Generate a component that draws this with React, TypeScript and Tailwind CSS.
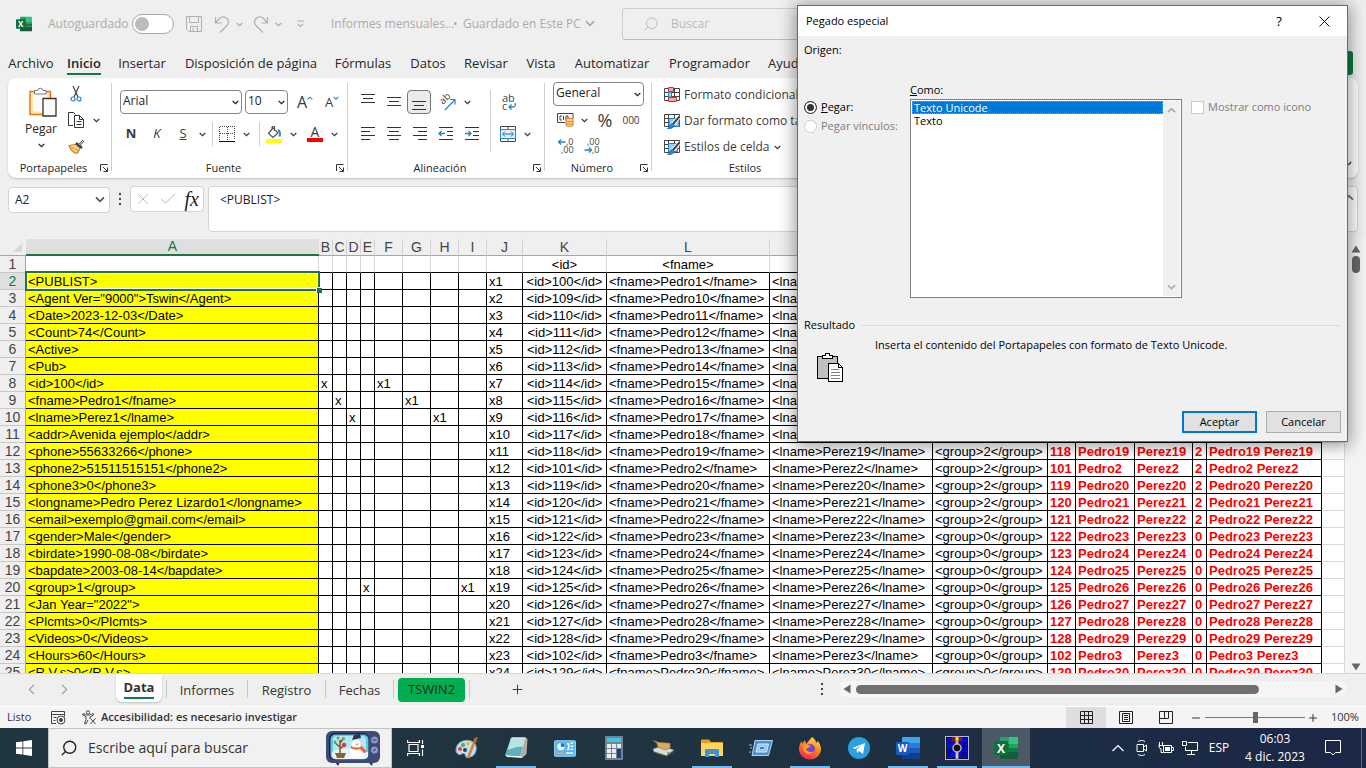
import React from 'react';
import { Search, Plus, Minus, X, Check, ChevronLeft, ChevronRight } from 'lucide-react';

type IconProps = { className?: string };

const menuTabs = [
  { label: 'Archivo', width: 'w-[60px]' },
  { label: 'Inicio', width: 'w-[46px]' },
  { label: 'Insertar', width: 'w-[70px]' },
  { label: 'Disposición de página', width: 'w-[148px]' },
  { label: 'Fórmulas', width: 'w-[76px]' },
  { label: 'Datos', width: 'w-[54px]' },
  { label: 'Revisar', width: 'w-[62px]' },
  { label: 'Vista', width: 'w-[48px]' },
  { label: 'Automatizar', width: 'w-[94px]' },
  { label: 'Programador', width: 'w-[101px]' },
  { label: 'Ayuda', width: 'w-[54px]' },
];

const columns = [
  { name: 'A', width: 293 },
  { name: 'B', width: 14 },
  { name: 'C', width: 14 },
  { name: 'D', width: 14 },
  { name: 'E', width: 14 },
  { name: 'F', width: 28 },
  { name: 'G', width: 28 },
  { name: 'H', width: 28 },
  { name: 'I', width: 28 },
  { name: 'J', width: 36 },
  { name: 'K', width: 84 },
  { name: 'L', width: 163 },
  { name: 'M', width: 163 },
  { name: 'N', width: 115 },
  { name: 'O', width: 28 },
  { name: 'P', width: 59 },
  { name: 'Q', width: 58 },
  { name: 'R', width: 14 },
  { name: 'S', width: 115 },
  { name: 'T', width: 23 },
];

const xmlLines = [
  '<PUBLIST>',
  '<Agent Ver="9000">Tswin</Agent>',
  '<Date>2023-12-03</Date>',
  '<Count>74</Count>',
  '<Active>',
  '<Pub>',
  '<id>100</id>',
  '<fname>Pedro1</fname>',
  '<lname>Perez1</lname>',
  '<addr>Avenida ejemplo</addr>',
  '<phone>55633266</phone>',
  '<phone2>51511515151</phone2>',
  '<phone3>0</phone3>',
  '<longname>Pedro Perez Lizardo1</longname>',
  '<email>exemplo@gmail.com</email>',
  '<gender>Male</gender>',
  '<birdate>1990-08-08</birdate>',
  '<bapdate>2003-08-14</bapdate>',
  '<group>1</group>',
  '<Jan Year="2022">',
  '<Plcmts>0</Plcmts>',
  '<Videos>0</Videos>',
  '<Hours>60</Hours>',
  '<R.V.s>0</R.V.s>',
];

// publishers come sorted as text: 1, 10..19, 2, 20..29, 3, 30
const people = [1, 10, 11, 12, 13, 14, 15, 16, 17, 18, 19, 2, 20, 21, 22, 23, 24, 25, 26, 27, 28, 29, 3, 30];

const marks: Record<string, string> = {
  B8: 'x', F8: 'x1',
  C9: 'x', G9: 'x1',
  D10: 'x', H10: 'x1',
  E20: 'x', I20: 'x1',
};

function cellText(col: string, row: number) {
  if (row === 1) {
    if (col === 'K') return '<id>';
    if (col === 'L') return '<fname>';
    if (col === 'M') return '<lname>';
    return '';
  }
  const n = people[row - 2];
  const group = row > 16 ? 0 : 2;
  switch (col) {
    case 'A': return xmlLines[row - 2];
    case 'J': return `x${row - 1}`;
    case 'K': return `<id>${n + 99}</id>`;
    case 'L': return `<fname>Pedro${n}</fname>`;
    case 'M': return `<lname>Perez${n}</lname>`;
    case 'N': return `<group>${group}</group>`;
    case 'O': return `${n + 99}`;
    case 'P': return `Pedro${n}`;
    case 'Q': return `Perez${n}`;
    case 'R': return `${group}`;
    case 'S': return `Pedro${n} Perez${n}`;
    default: return marks[`${col}${row}`] ?? '';
  }
}

function cellClass(col: string, row: number) {
  const base = 'h-[17px] p-0 pt-0.5 whitespace-nowrap leading-[14px] border-r border-b';
  const align = row === 1 || col === 'K' ? 'text-center' : 'text-left pl-0.5';
  const line = row === 1
    ? `border-r-[#d9d9d9] ${col === 'T' ? 'border-b-[#d9d9d9]' : 'border-b-black'}`
    : col === 'T' ? 'border-[#d9d9d9]' : 'border-black';
  const fill = col === 'A' && row > 1 ? 'bg-[#ffff00]' : 'bg-white';
  const ink = 'OPQRS'.includes(col) ? 'font-bold text-[#ff0000]' : 'text-black';
  return `${base} ${align} ${line} ${fill} ${ink}`;
}

function Chevron({ className = 'w-[7px]' }: IconProps) {
  return (
    <svg viewBox="0 0 7 5" className={`shrink-0 ${className}`} fill="none" stroke="currentColor" strokeWidth="1.2">
      <path d="M.7 1l2.8 2.7L6.3 1" />
    </svg>
  );
}

function Launcher() {
  return (
    <button aria-label="Más opciones" className="absolute right-[3px] bottom-1.5">
      <svg viewBox="0 0 8 8" className="w-2 h-2" fill="none" stroke="#333">
        <path d="M.5 7V.5H7.5M3 3l4 4M7.5 3.5v4h-4" />
      </svg>
    </button>
  );
}

function Group({ label, width, launcher = true, children }: { label: string; width: string; launcher?: boolean; children: React.ReactNode }) {
  return (
    <>
      <section aria-label={label} className={`relative flex flex-col shrink-0 h-[100px] ${width}`}>
        <div className="h-[82px]">{children}</div>
        <div className="text-center text-[11px] leading-4 text-[#262626] pr-3">{label}</div>
        {launcher && <Launcher />}
      </section>
      <div className="w-px h-[88px] mt-[5px] shrink-0 bg-[#cfcfcf]" />
    </>
  );
}

function Tool({ label, className = 'w-[26px]', children }: { label: string; className?: string; children: React.ReactNode }) {
  return (
    <button aria-label={label} className={`h-6 flex items-center justify-center shrink-0 text-[#3b3b3b] ${className}`}>
      {children}
    </button>
  );
}

function Lines({ d }: { d: string }) {
  return (
    <svg viewBox="0 0 16 16" className="w-4 h-4" fill="none" stroke="#333" shapeRendering="crispEdges">
      <path d={d} />
    </svg>
  );
}

function Combo({ label, value, className }: { label: string; value: string; className: string }) {
  return (
    <div className={`relative h-6 shrink-0 ${className}`}>
      <select aria-label={label} className="appearance-none block w-full h-6 rounded-[4px] border border-[#858585] bg-white pl-0.5 pb-0.5 text-xs leading-4 text-[#222]">
        <option>{value}</option>
      </select>
      <Chevron className="w-[7px] absolute right-[3px] top-[10px] text-[#222] pointer-events-none" />
    </div>
  );
}

function ExcelLogo({ className }: IconProps) {
  return (
    <svg viewBox="0 0 24 24" className={className}>
      <path d="M7 1h8v7H6V2a1 1 0 011-1z" fill="#21a366" />
      <path d="M15 1h8a1 1 0 011 1v6h-9z" fill="#33c481" />
      <path d="M6 8h9v8H6z" fill="#107c41" />
      <path d="M15 8h9v4h-9z" fill="#21a366" />
      <path d="M15 12h9v4h-9z" fill="#107c41" />
      <path d="M6 16h18v6a1 1 0 01-1 1H7a1 1 0 01-1-1z" fill="#185c37" />
      <rect x="0" y="5" width="14" height="14" rx="1" fill="#0f703b" />
      <text x="7" y="16.500" fontSize="12" fontWeight="700" fill="#fff" textAnchor="middle" fontFamily="Open Sans, sans-serif">X</text>
    </svg>
  );
}

function WordLogo({ className }: IconProps) {
  return (
    <svg viewBox="0 0 24 24" className={className}>
      <path d="M6 2a1 1 0 011-1h16a1 1 0 011 1v5H6z" fill="#41a5ee" />
      <path d="M6 7h18v5H6z" fill="#2b7cd3" />
      <path d="M6 12h18v5H6z" fill="#185abd" />
      <path d="M6 17h18v5a1 1 0 01-1 1H7a1 1 0 01-1-1z" fill="#103f91" />
      <rect x="0" y="6" width="13" height="13" rx="1" fill="#185abd" />
      <text x="6.500" y="16" fontSize="10" fontWeight="700" fill="#fff" textAnchor="middle" fontFamily="Open Sans, sans-serif">W</text>
    </svg>
  );
}

function TitleBar() {
  return (
    <header className="h-12 flex items-center pl-4 text-[#ababab] shrink-0 overflow-hidden">
      <ExcelLogo className="w-4 h-4 shrink-0" />
      <label htmlFor="autosave" className="ml-4 w-[84px] shrink-0 text-xs whitespace-nowrap">Autoguardado</label>
      <span className="relative w-[42px] h-5 shrink-0">
        <input id="autosave" type="checkbox" className="appearance-none block w-[42px] h-5 rounded-full border border-[#a8a8a8] bg-white" />
        <span className="absolute left-[3px] top-[3px] w-3.5 h-3.5 rounded-full bg-[#bdbdbd] pointer-events-none" />
      </span>
      <button aria-label="Guardar" className="ml-3 shrink-0">
        <svg viewBox="0 0 16 16" className="w-4 h-4" fill="none" stroke="#b0b0b0">
          <path d="M.5.5h15v15H3l-2.500-2.500zM3.500.5v6h9v-6M4.500 15.500v-5h7v5M7 15v-3" />
        </svg>
      </button>
      <button aria-label="Deshacer" className="ml-3 shrink-0 flex items-center gap-1.5">
        <svg viewBox="0 0 16 17" className="w-4 h-[17px]" fill="none" stroke="#b0b0b0" strokeWidth="1.2">
          <path d="M1.500 1v6h6M1.500 7l4-4.500a5 5 0 017.500 0 5 5 0 010 7L6 16.500" />
        </svg>
        <Chevron />
      </button>
      <button aria-label="Rehacer" className="ml-2.5 shrink-0 flex items-center gap-1.5">
        <svg viewBox="0 0 16 17" className="w-4 h-[17px]" fill="none" stroke="#b0b0b0" strokeWidth="1.2">
          <path d="M14.500 1v6h-6M14.500 7l-4-4.500a5 5 0 00-7.500 0 5 5 0 000 7l7 7" />
        </svg>
        <Chevron />
      </button>
      <button aria-label="Personalizar barra" className="ml-[14px] shrink-0">
        <svg viewBox="0 0 9 8" className="w-[9px] h-2" fill="none" stroke="#b0b0b0" strokeWidth="1.2">
          <path d="M1 1h7M2 4l2.500 2.500L7 4" />
        </svg>
      </button>
      <div className="ml-[26px] w-[291px] shrink-0 flex items-center text-xs whitespace-nowrap">
        <span className="w-[122px] shrink-0">Informes mensuales...</span>
        <span className="w-2.5 shrink-0">•</span>
        <span className="mr-1 shrink-0">Guardado en Este PC</span>
        <Chevron className="w-2.5" />
      </div>
      <div className="w-[500px] shrink-0 h-8 flex items-center rounded-[3px] border border-[#cfcfcf] border-b-[#bdbdbd] bg-[#efefef] pl-5">
        <Search className="w-4 h-4 -scale-x-100 text-[#bdbdbd]" strokeWidth={1.5} />
        <input aria-label="Buscar" placeholder="Buscar" className="ml-3 w-40 text-xs bg-transparent placeholder:text-[#b9b9b9]" />
      </div>
    </header>
  );
}

function MenuTabs() {
  return (
    <nav className="h-[30px] pl-px flex shrink-0 items-start justify-between">
      <div className="flex">
        {menuTabs.map((tab) => (
          <a
            key={tab.label}
            href="#"
            className={`shrink-0 h-[27px] flex flex-col items-center pt-1.5 text-[13px] leading-[19px] whitespace-nowrap text-[#262626] ${tab.width}`}
          >
            <span className={tab.label === 'Inicio' ? 'font-semibold border-b-2 border-[#107c41]' : ''}>{tab.label}</span>
          </a>
        ))}
      </div>
      <button className="mt-[3px] mr-[13px] w-24 h-6 rounded-[3px] bg-[#0f7b3f] text-white text-xs">Compartir</button>
    </nav>
  );
}

function StyleIcon({ kind }: { kind: 'cond' | 'table' | 'cell' }) {
  return (
    <svg viewBox="0 0 16 16" className="w-4 h-4 shrink-0" fill="none" stroke="#444">
      <path d="M.5 1.500h15v12H.5zM.5 5.500h15M.5 9.500h15M4.500 1.500v12M10.500 1.500v12" fill="#fff" />
      {kind === 'cond' && (
        <>
          <path d="M4.500.500h5v4h-5zM4.500 10.500h8v4h-8z" fill="#f7a6a6" stroke="#d92c2c" />
          <path d="M4.500 5h3v5h-3z" fill="#9ccdf0" stroke="#1f7fc9" />
        </>
      )}
      {kind !== 'cond' && (
        <>
          <path d={kind === 'table' ? 'M5 5.500h10v8H5z' : 'M4.500 4.500h9v8h-9z'} fill="#9ccdf0" stroke="#1f7fc9" />
          <path d="M15.500 3.500L9 11" stroke="#fff" strokeWidth="4" />
          <path d="M15.500 3.500L9 11" stroke="#444" strokeWidth="2" />
          <path d="M8.500 10.500l2 2c-1.500 3-4 3-7 3 2-1 2-4 5-5z" fill="#2b88d0" stroke="#1f6fb5" />
        </>
      )}
    </svg>
  );
}

function Ribbon() {
  return (
    <div className="mx-2 h-[100px] shrink-0 flex overflow-hidden rounded-lg bg-white shadow-[0_1px_2px_rgba(0,0,0,0.2)]">
      <Group label="Portapapeles" width="w-[103px]">
        <div className="flex pt-1">
          <button className="w-[58px] pl-2 pt-1 flex flex-col items-center text-xs leading-4 text-[#262626]">
            <svg viewBox="0 0 28 31" className="w-7 h-[31px] ml-1" fill="none">
              <path d="M1 5.500h20.500v23H1z" fill="#fbe3a6" stroke="#e07b12" strokeWidth="1.500" />
              <path d="M4 8h14.500v17.500H4z" fill="#fafafa" />
              <path d="M5.500 8V4.500h3a2.800 2.800 0 015.500 0h3V8z" fill="#fff" stroke="#777" />
              <path d="M14 12.500h13v17.500H14z" fill="#fafafa" stroke="#333" strokeWidth="1.300" />
            </svg>
            <span className="mt-1">Pegar</span>
            <Chevron className="w-[7px] mt-1.5" />
          </button>
          <div className="flex flex-col gap-0.5">
            <Tool label="Cortar" className="w-5">
              <svg viewBox="0 0 12 16" className="w-3 h-4" fill="none" stroke="#444" strokeWidth="1.200">
                <path d="M3 0l5 11M9 0L4 11" />
                <circle cx="3" cy="13" r="2" stroke="#1f86d0" />
                <circle cx="9" cy="13" r="2" stroke="#1f86d0" />
              </svg>
            </Tool>
            <Tool label="Copiar" className="w-9 gap-2">
              <svg viewBox="0 0 17 16" className="w-[17px] h-4" fill="none" stroke="#333">
                <path d="M5 13.500H.5V.5H5.500l2 2M6.500 3.500h5l4 4v8h-9zM11.500 3.500v4h4M8.500 9.500h5M8.500 12.500h5" />
              </svg>
              <Chevron />
            </Tool>
            <Tool label="Copiar formato" className="w-5">
              <svg viewBox="0 0 17 15" className="w-[17px] h-[15px]" fill="none">
                <path d="M1 6.500l7-1 4 4-3 5C5 13.500 2.500 11 1 6.500z" fill="#fbd9a0" stroke="#e07b12" strokeWidth="1.200" />
                <path d="M3 8l8 4" stroke="#e07b12" />
                <path d="M8 4l6 5M11 6.500l4.500-5" stroke="#444" strokeWidth="2.500" />
                <path d="M11.500 6l4-4.500" stroke="#fff" />
              </svg>
            </Tool>
          </div>
        </div>
      </Group>

      <Group label="Fuente" width="w-[235px]">
        <div className="flex flex-col gap-2 pt-3">
          <div className="flex items-center pl-2 gap-[3px] h-6">
            <Combo label="Fuente" value="Arial" className="w-[122px]" />
            <Combo label="Tamaño" value="10" className="w-[43px]" />
            <Tool label="Aumentar tamaño" className="w-7 text-base leading-4">A<Chevron className="w-1.5 -scale-y-100 mb-2 text-[#1f86d0]" /></Tool>
            <Tool label="Disminuir tamaño" className="w-5 text-[13px] leading-4">A<Chevron className="w-1.5 mb-2 text-[#1f86d0]" /></Tool>
          </div>
          <div className="flex items-center pl-1.5 text-[13px]">
            <Tool label="Negrita"><b>N</b></Tool>
            <Tool label="Cursiva"><i>K</i></Tool>
            <Tool label="Subrayado"><u>S</u></Tool>
            <Tool label="Más subrayados" className="w-3"><Chevron /></Tool>
            <div className="w-px h-6 mx-1 bg-[#cfcfcf]" />
            <Tool label="Bordes" className="w-5">
              <svg viewBox="0 0 16 16" className="w-4 h-4" fill="none" stroke="#444" shapeRendering="crispEdges">
                <path d="M.5 14V.5h15V14M8 1v14M1 7.500h14" strokeDasharray="1 1" />
                <path d="M0 15.500h16" stroke="#111" strokeWidth="1" />
              </svg>
            </Tool>
            <Tool label="Más bordes" className="w-[18px]"><Chevron /></Tool>
            <div className="w-px h-6 mx-1 bg-[#cfcfcf]" />
            <Tool label="Color de relleno" className="w-5">
              <svg viewBox="0 0 16 17" className="w-4 h-[17px]" fill="none">
                <path d="M7 2l5 5-5 4.500L2.500 7.500zM6 4V1.500a1.200 1.200 0 012.500 0V5" stroke="#555" strokeWidth="1.200" />
                <path d="M12 4c2 1 2.500 4 1.500 6.500" stroke="#1f86d0" strokeWidth="2" />
                <path d="M0 13h16v4H0z" fill="#ff0" />
              </svg>
            </Tool>
            <Tool label="Más rellenos" className="w-[18px]"><Chevron /></Tool>
            <Tool label="Color de fuente" className="w-[26px] flex-col">
              <span className="text-sm leading-3">A</span>
              <span className="w-4 h-1 bg-[#ff0000]" />
            </Tool>
            <Tool label="Más colores" className="w-3"><Chevron /></Tool>
          </div>
        </div>
      </Group>

      <Group label="Alineación" width="w-[196px]">
        <div className="flex pt-3">
          <div className="flex flex-col gap-2 pl-[7px]">
            <div className="flex items-center">
              <Tool label="Alinear arriba"><Lines d="M1 .5h14M3 4.500h10M1 8.500h14" /></Tool>
              <Tool label="Alinear en medio"><Lines d="M1 3.500h14M3 7.500h10M1 11.500h14" /></Tool>
              <Tool label="Alinear abajo" className="w-6 rounded-[4px] border border-[#777] bg-[#ebebeb]"><Lines d="M1 7.500h14M3 11.500h10M1 15.500h14" /></Tool>
              <Tool label="Orientación" className="w-8">
                <svg viewBox="0 0 18 18" className="w-[18px] h-[18px] overflow-visible" fill="none" stroke="#1f86d0" strokeWidth="1.200">
                  <text x="0" y="0" fontSize="10" fill="#444" stroke="none" transform="translate(5 12) rotate(-45)">ab</text>
                  <path d="M7 17L16.500 7M12 6.500h5v5" />
                </svg>
              </Tool>
              <Tool label="Más orientaciones" className="w-2"><Chevron /></Tool>
            </div>
            <div className="flex items-center">
              <Tool label="Izquierda"><Lines d="M1 1.500h14M1 5.500h9M1 9.500h14M1 13.500h9" /></Tool>
              <Tool label="Centrar"><Lines d="M1 1.500h14M3 5.500h10M1 9.500h14M3 13.500h10" /></Tool>
              <Tool label="Derecha"><Lines d="M1 1.500h14M6 5.500h9M1 9.500h14M6 13.500h9" /></Tool>
              <Tool label="Disminuir sangría">
                <svg viewBox="0 0 16 16" className="w-4 h-4" fill="none" stroke="#333">
                  <path d="M1 1.500h14M9 5.500h6M9 9.500h6M1 13.500h14" />
                  <path d="M1 7.500h6M3.500 5L1 7.500 3.500 10" stroke="#1f86d0" strokeWidth="1.300" />
                </svg>
              </Tool>
              <Tool label="Aumentar sangría">
                <svg viewBox="0 0 16 16" className="w-4 h-4" fill="none" stroke="#333">
                  <path d="M1 1.500h14M9 5.500h6M9 9.500h6M1 13.500h14" />
                  <path d="M1 7.500h6M4.500 5L7 7.500 4.500 10" stroke="#1f86d0" strokeWidth="1.300" />
                </svg>
              </Tool>
            </div>
          </div>
          <div className="w-px h-[62px] ml-[5px] bg-[#cfcfcf]" />
          <div className="flex flex-col gap-2 pl-2">
            <Tool label="Ajustar texto" className="w-5">
              <svg viewBox="0 0 16 17" className="w-4 h-[17px] overflow-visible" fill="none" stroke="#1f86d0" strokeWidth="1.300">
                <text x="1" y="8" fontSize="11" fill="#444" stroke="none">ab</text>
                <text x="1" y="16" fontSize="11" fill="#444" stroke="none">c</text>
                <path d="M14 9c1 2 0 4-2.500 4H8M10.500 10.500L8 13l2.500 2.500" />
              </svg>
            </Tool>
            <Tool label="Combinar y centrar" className="w-8 gap-2">
              <svg viewBox="0 0 16 16" className="w-4 h-4" fill="none" stroke="#444">
                <path d="M.5.500h15v15H.5zM8 .5v3M8 12.500v3" />
                <path d="M.5 3.500h15v9H.5z" fill="#e4f1fb" stroke="#1f86d0" />
                <path d="M3 8h10M5 5.500L2.500 8 5 10.500M11 5.500L13.500 8 11 10.500" stroke="#1f6fb5" />
              </svg>
              <Chevron />
            </Tool>
          </div>
        </div>
      </Group>

      <Group label="Número" width="w-[106px]">
        <div className="pt-1 pl-2">
          <Combo label="Formato de número" value="General" className="w-[91px]" />
          <div className="flex items-center mt-0.5">
            <Tool label="Moneda" className="w-6">
              <svg viewBox="0 0 17 14" className="w-[17px] h-[14px]" fill="none" stroke="#444">
                <path d="M16 5V.500H.5v9H8M5 3H3v4h2M6.500 3v4M9 7V3h2v2" />
                <path d="M9 5.500h7v7c-1.500 1.200-5.500 1.200-7 0z" fill="#fbd9a0" stroke="#e07b12" />
                <path d="M9 8c2 1 5 1 7 0M9 10.500c2 1 5 1 7 0" stroke="#e07b12" />
              </svg>
            </Tool>
            <Tool label="Más monedas" className="w-3.5"><Chevron /></Tool>
            <Tool label="Porcentaje" className="w-7 text-lg leading-4">%</Tool>
            <Tool label="Millares" className="w-6 text-[10px]">000</Tool>
          </div>
          <div className="flex items-center mt-0.5">
            <Tool label="Aumentar decimales">
              <svg viewBox="0 0 16 16" className="w-4 h-4 overflow-visible" fill="none" stroke="#1f86d0" strokeWidth="1.300">
                <path d="M.5 4h7M3 1.500L.5 4 3 6.500" />
                <text x="8" y="7" fontSize="9" fill="#444" stroke="none">,0</text>
                <text x="3" y="15" fontSize="9" fill="#444" stroke="none">,00</text>
              </svg>
            </Tool>
            <Tool label="Disminuir decimales">
              <svg viewBox="0 0 16 16" className="w-4 h-4 overflow-visible" fill="none" stroke="#1f86d0" strokeWidth="1.300">
                <path d="M.5 12h7M5 9.500L7.500 12 5 14.500" />
                <text x="3" y="7" fontSize="9" fill="#444" stroke="none">,00</text>
                <text x="8" y="15" fontSize="9" fill="#444" stroke="none">,0</text>
              </svg>
            </Tool>
          </div>
        </div>
      </Group>

      <Group label="Estilos" width="w-[198px]" launcher={false}>
        <div className="flex flex-col gap-0.5 pt-[5px] pl-3 text-xs whitespace-nowrap">
          <Tool label="Formato condicional" className="justify-start! gap-1"><StyleIcon kind="cond" />Formato condicional<Chevron /></Tool>
          <Tool label="Dar formato como tabla" className="justify-start! gap-1"><StyleIcon kind="table" />Dar formato como tabla<Chevron /></Tool>
          <Tool label="Estilos de celda" className="justify-start! gap-1"><StyleIcon kind="cell" />Estilos de celda<Chevron /></Tool>
        </div>
      </Group>
      <button aria-label="Contraer cinta" className="ml-auto mr-1.5 self-end mb-3 text-[#333]"><Chevron /></button>
    </div>
  );
}

function FormulaBar() {
  return (
    <div className="mt-2 mb-[7px] mx-2 flex items-start shrink-0 text-[#222]">
      <div className="relative w-[102px] h-[26px]">
        <input aria-label="Cuadro de nombres" defaultValue="A2" className="w-full h-full rounded-[4px] border border-[#d3d3d3] bg-white pl-1.5 text-xs" />
        <Chevron className="w-2.5 absolute right-[5px] top-[10px] text-[#555]" />
      </div>
      <div className="w-5 h-[26px] flex flex-col items-center justify-center gap-[3px]">
        <span className="w-0.5 h-0.5 bg-[#444]" />
        <span className="w-0.5 h-0.5 bg-[#444]" />
        <span className="w-0.5 h-0.5 bg-[#444]" />
      </div>
      <div className="w-[74px] h-[26px] flex items-center justify-between pl-[3px] pr-1 rounded-[4px] border border-[#d3d3d3] bg-white text-[#b5b5b5]">
        <button aria-label="Cancelar entrada"><X className="w-[18px] h-[18px]" strokeWidth={1.2} /></button>
        <button aria-label="Introducir"><Check className="w-5 h-5" strokeWidth={1.2} /></button>
        <button aria-label="Insertar función" className="font-['Liberation_Serif',serif] italic text-xl leading-4 text-[#222]">fx</button>
      </div>
      <div className="relative flex-1 ml-1">
        <textarea aria-label="Barra de fórmulas" defaultValue="<PUBLIST>" className="block w-full h-[46px] resize-none overflow-hidden rounded-[4px] border border-[#d3d3d3] bg-white pl-[11px] pt-[5px] text-xs" />
        <Chevron className="w-2.5 absolute right-1 top-2 -scale-y-100 text-[#666]" />
      </div>
    </div>
  );
}

function Sheet() {
  const rows = Array.from({ length: 25 }, (_, i) => i + 1);
  return (
    <div className="flex flex-1 min-h-0 overflow-hidden border-b border-[#d6d6d6]">
      <div className="w-[1345px] shrink-0 overflow-hidden">
        <table className="table-fixed w-[1345px] border-separate border-spacing-0 font-['Liberation_Sans',Arial,sans-serif] text-[13px]">
          <colgroup>
            <col style={{ width: 26 }} />
            {columns.map((c) => <col key={c.name} style={{ width: c.width }} />)}
          </colgroup>
          <thead>
            <tr>
              <th className="h-[17px] p-0 border-b border-[#a6a6a6]">
                <svg viewBox="0 0 26 16" className="block w-[26px] h-4"><path d="M22 4v9H13z" fill="#d8d8d8" /></svg>
              </th>
              {columns.map((c) => (
                <th
                  key={c.name}
                  className={c.name === 'A'
                    ? 'h-[17px] p-0 font-normal text-sm leading-[15px] text-[#217346] bg-[#dfdfdf] border-b-2 border-[#217346]'
                    : 'h-[17px] p-0 font-normal text-sm leading-4 text-[#444] border-b border-r border-b-[#a6a6a6] border-r-[#d3d3d3]'}
                >
                  {c.name}
                </th>
              ))}
            </tr>
          </thead>
          <tbody>
            {rows.map((row) => (
              <tr key={row}>
                <th
                  className={row === 2
                    ? 'h-[17px] p-0 font-normal text-sm leading-4 text-[#217346] bg-[#dfdfdf] border-r border-b border-r-[#217346] border-b-[#c8c8c8]'
                    : 'h-[17px] p-0 font-normal text-sm leading-4 text-[#444] border-r border-b border-r-[#a6a6a6] border-b-[#c8c8c8]'}
                >
                  {row}
                </th>
                {columns.map((c) => (
                  <td key={c.name} className={`${c.name === 'A' && row === 2 ? 'relative' : ''} ${cellClass(c.name, row)}`}>
                    {cellText(c.name, row)}
                    {c.name === 'A' && row === 2 && (
                      <span className="absolute -left-px -top-0.5 -right-0.5 -bottom-0.5 border-2 border-[#217346] shadow-[inset_0_0_0_1px_#fff]">
                        <span className="absolute -right-1 -bottom-1 w-1.5 h-1.5 bg-[#217346] border-t border-l border-white" />
                      </span>
                    )}
                  </td>
                ))}
              </tr>
            ))}
          </tbody>
        </table>
      </div>
      <div className="flex-1 min-w-[21px] flex flex-col items-center pt-1.5 pb-0.5 bg-[#f4f4f4]">
        <svg viewBox="0 0 10 8" className="w-2.5 h-2" fill="#666"><path d="M5 .5L9.500 7.500H.5z" /></svg>
        <div className="mt-[3px] w-2 h-[17px] rounded-full bg-[#666]" />
        <svg viewBox="0 0 10 8" className="w-2.5 h-2 mt-auto" fill="#666"><path d="M5 7.500L9.500.5H.5z" /></svg>
      </div>
    </div>
  );
}

function SheetTabs() {
  return (
    <div className="h-8 shrink-0 flex items-start text-[13px] text-[#333]">
      <div className="w-[116px] h-[30px] flex items-center pl-[23px] gap-4 text-[#a0a0a0]">
        <button aria-label="Hoja anterior"><ChevronLeft className="w-[17px] h-[17px]" strokeWidth={1.5} /></button>
        <button aria-label="Hoja siguiente"><ChevronRight className="w-[17px] h-[17px]" strokeWidth={1.5} /></button>
      </div>
      <button className="w-[46px] h-7 rounded-b-md bg-white shadow-[0_1px_2px_rgba(0,0,0,0.2)] font-bold">
        <span className="inline-block leading-[19px] border-b-2 border-[#107c41]">Data</span>
      </button>
      <span className="w-px h-[18px] mt-1.5 ml-1 bg-[#cacaca]" />
      <button className="w-20 h-8 leading-8">Informes</button>
      <span className="w-px h-[18px] mt-1.5 bg-[#cacaca]" />
      <button className="w-[77px] h-8 leading-8">Registro</button>
      <span className="w-px h-[18px] mt-1.5 bg-[#cacaca]" />
      <button className="w-[67px] h-8 leading-8">Fechas</button>
      <span className="w-px h-[18px] mt-1.5 bg-[#cacaca]" />
      <button className="w-[67px] h-6 mt-1 ml-1 rounded-[4px] bg-[#00ad4f] text-[#10261a]">TSWIN2</button>
      <span className="w-px h-[18px] mt-1.5 ml-1 bg-[#cacaca]" />
      <button aria-label="Hoja nueva" className="ml-10 mt-2"><Plus className="w-[15px] h-[15px]" strokeWidth={1.5} /></button>
      <div className="ml-auto mr-[19px] flex items-center h-[30px] flex-none">
        <div className="w-[18px] flex flex-col items-start gap-[3px]">
          <span className="w-0.5 h-0.5 bg-[#444]" />
          <span className="w-0.5 h-0.5 bg-[#444]" />
          <span className="w-0.5 h-0.5 bg-[#444]" />
        </div>
        <div className="w-[508px] h-4 px-1 flex items-center gap-[5px] rounded-full bg-[#f5f5f5]">
          <svg viewBox="0 0 8 10" className="w-2 h-2.5" fill="#666"><path d="M.5 5L7.500.5v9z" /></svg>
          <div className="w-[403px] h-[9px] rounded-full bg-[#707070]" />
          <svg viewBox="0 0 8 10" className="w-2 h-2.5 ml-auto" fill="#666"><path d="M7.500 5L.5.5v9z" /></svg>
        </div>
      </div>
    </div>
  );
}

function StatusBar() {
  return (
    <footer className="h-[22px] shrink-0 flex items-center justify-between border-t border-white bg-[#f4f4f4] text-[11px] text-[#333]">
      <div className="flex items-center pl-[7px]">
        <span className="w-11">Listo</span>
        <svg viewBox="0 0 15 14" className="w-[15px] h-[14px]" fill="none" stroke="#444">
          <path d="M5 12.500H.5V.5h13v5M.5 3.500h13M2.500 6.500h3M2.500 9.500h2" />
          <circle cx="10" cy="9" r="4" />
          <circle cx="10" cy="9" r="1.500" fill="#444" />
        </svg>
        <svg viewBox="0 0 15 15" className="w-[15px] h-[15px] ml-4" fill="none" stroke="#444">
          <circle cx="6" cy="2.500" r="1.700" />
          <path d="M1 3.500c3 2 7 2 10 0l.5 1.500-3.500 2v2M1 3.500L.7 5 4 6.500v3l-1.500 4 1.500.5 2-4M8.500 8.500l5 5.500M13.500 8.500l-5 5.500" />
        </svg>
        <button className="ml-1 font-semibold">Accesibilidad: es necesario investigar</button>
      </div>
      <div className="flex items-center h-full">
        <button aria-label="Normal" className="w-10 h-full flex items-center justify-center bg-[#dedede]">
          <svg viewBox="0 0 13 13" className="w-[13px] h-[13px]" fill="none" stroke="#222"><path d="M.5.500h12v12H.5zM.5 4.500h12M.5 8.500h12M4.500.500v12M8.500.500v12" /></svg>
        </button>
        <button aria-label="Diseño de página" className="w-10 h-full flex items-center justify-center">
          <svg viewBox="0 0 14 13" className="w-[14px] h-[13px]" fill="none" stroke="#222"><path d="M.5.500h13v12H.5zM3.500 2.500h7v8h-7zM5 4.500h4M5 6.500h4M5 8.500h4" /></svg>
        </button>
        <button aria-label="Salto de página" className="w-10 h-full flex items-center justify-center">
          <svg viewBox="0 0 14 13" className="w-[14px] h-[13px]" fill="none" stroke="#222"><path d="M.5.500h13v12H.5zM5.500.500v7H9.500V.5M.5 7.500h5" /></svg>
        </button>
        <button aria-label="Alejar" className="ml-1"><Minus className="w-3 h-3" strokeWidth={2} /></button>
        <input
          type="range"
          aria-label="Zoom"
          defaultValue={50}
          className="appearance-none w-[100px] h-3 ml-[3px] mr-0.5 bg-transparent [&::-webkit-slider-runnable-track]:h-px [&::-webkit-slider-runnable-track]:bg-[#777] [&::-webkit-slider-thumb]:appearance-none [&::-webkit-slider-thumb]:w-[5px] [&::-webkit-slider-thumb]:h-[11px] [&::-webkit-slider-thumb]:-mt-[5px] [&::-webkit-slider-thumb]:bg-[#666]"
        />
        <button aria-label="Acercar"><Plus className="w-3 h-3" strokeWidth={2} /></button>
        <span className="w-[47px] pl-3">100%</span>
      </div>
    </footer>
  );
}

function SnowTv() {
  return (
    <svg viewBox="0 0 54 36" className="w-[54px] h-9">
      <path d="M9 32h5l-2 4zM42 32h5l-1 4z" fill="#2c3558" />
      <rect x="0" y="1" width="54" height="32" rx="6" fill="#3f4a77" />
      <rect x="3" y="3" width="40" height="27" rx="6" fill="#17233f" />
      <rect x="4.500" y="4.500" width="38" height="25" rx="5" fill="#5ec9d8" />
      <rect x="7" y="6" width="33" height="22" rx="4" fill="#b5e6f3" />
      <path d="M6 22c10-5 25-5 36 0v3a4 4 0 01-4 4H10a4 4 0 01-4-4z" fill="#e4f5fb" />
      <path d="M14 25V10M14 17l-5-4M14 19l5-5M14 13l3-4" stroke="#7a5a35" strokeWidth="1.500" fill="none" />
      <path d="M9 23h11l-2 5h-7z" fill="#8f5f2d" />
      <circle cx="9" cy="12" r="1.500" fill="#6aa35c" />
      <circle cx="12" cy="8" r="1.500" fill="#6aa35c" />
      <circle cx="17.500" cy="8.500" r="1.500" fill="#6aa35c" />
      <circle cx="18" cy="15" r="2.300" fill="#e23b2e" />
      <circle cx="30" cy="23" r="6" fill="#fff" />
      <circle cx="30" cy="14" r="4.500" fill="#fff" />
      <path d="M26 10l9-2-1-4-6 1z" fill="#2a3153" />
      <path d="M25 16c4 2 8 2 11 0l5 6-3 1-4-4c-3 1-6 1-9-1z" fill="#f0642d" />
      <path d="M30 14l4-.5-4 2z" fill="#f08a2d" />
      <circle cx="48.500" cy="10" r="3.500" fill="#8c97cf" />
      <circle cx="48.500" cy="20" r="3.500" fill="#8c97cf" />
      <path d="M46.500 10h4M47 21l3-2" stroke="#2c3558" />
    </svg>
  );
}

const apps: { name: string; state?: 'open' | 'active'; icon: React.ReactNode }[] = [
  {
    name: 'Vista de tareas',
    icon: (
      <svg viewBox="0 0 18 16" className="w-[18px] h-4 mr-1" fill="none" stroke="#fff" strokeWidth="1.200">
        <path d="M2 4.500h9v7H2zM.6 0v2.500h11.800V0M.6 16v-2.500h11.800V16M15.500 0v4M15.500 9.500V16" />
        <path d="M14 5h3v3h-3z" fill="#fff" stroke="none" />
      </svg>
    ),
  },
  {
    name: 'Paint',
    icon: (
      <svg viewBox="0 0 24 24" className="w-6 h-6">
        <path d="M1 14C1 7 8 3.500 14 4.500c6 1 8 5 7 10-1 5-5 7-9 7-2 0-1-3-3-4s-3 2-5 1-3-2-3-4.500z" fill="#c4def0" stroke="#7ba6c4" />
        <circle cx="5" cy="13" r="2" fill="#e0442e" />
        <circle cx="8" cy="9" r="2" fill="#4fae4a" />
        <circle cx="13" cy="7.500" r="1.800" fill="#efb828" />
        <circle cx="10" cy="14" r="2" fill="#22406b" />
        <path d="M13 22l6-15" stroke="#d98330" strokeWidth="2.500" />
        <path d="M18 7l1-5 4-1-2 6z" fill="#b0662c" />
      </svg>
    ),
  },
  {
    name: 'Bloc de notas',
    state: 'open',
    icon: (
      <svg viewBox="0 0 24 24" className="w-6 h-6">
        <path d="M7 2h14l-4 18-16-1z" fill="#5fb0be" />
        <path d="M7 2h14l-2 9C14 10 9 12 3.500 14z" fill="#b9e2e6" />
        <path d="M1 19l16 1 .5 2L3 21z" fill="#e9eeee" />
        <path d="M21 2l2 1-1 15-4.500 4-.5-2z" fill="#b6a98f" stroke="#e8e8e4" strokeWidth=".6" />
        <path d="M7.500 2h14" stroke="#dbe9eb" strokeWidth="1.500" />
      </svg>
    ),
  },
  {
    name: 'Panel de control',
    icon: (
      <svg viewBox="0 0 24 18" className="w-[22px] h-[17px]">
        <rect x=".5" y=".5" width="23" height="17" rx="1" fill="#5bb8ef" stroke="#9edcff" />
        <circle cx="7.500" cy="7" r="4" fill="#e8f6ff" />
        <path d="M7.500 7V3a4 4 0 014 4z" fill="#1b70bd" />
        <path d="M14 4h2v6h-2M18 3h3M18 6.500h3M18 10h3" stroke="#fff" strokeWidth="1.500" fill="none" />
        <path d="M3 14h7" stroke="#f3a83b" strokeWidth="1.500" />
        <path d="M13 14h8" stroke="#fff" strokeWidth="1.500" />
      </svg>
    ),
  },
  {
    name: 'Calculadora',
    icon: (
      <svg viewBox="0 0 18 24" className="w-[18px] h-6">
        <rect width="18" height="24" rx="1" fill="#77828c" />
        <rect x="2" y="2" width="14" height="4" fill="#38c6f0" />
        <path d="M2 8h4v4H2zM7 8h4v4H7zM12 8h4v4h-4zM2 13h4v4H2zM7 13h4v4H7zM2 18h4v4H2zM7 18h4v4H7z" fill="#e9edf0" />
        <path d="M12 13h4v9h-4z" fill="#17427f" />
      </svg>
    ),
  },
  {
    name: 'Digitalizador',
    icon: (
      <svg viewBox="0 0 24 18" className="w-[23px] h-[18px]">
        <path d="M1 10l9-3 13 4-8 6-13-4z" fill="#d9dbd9" stroke="#777" strokeWidth=".5" />
        <path d="M2 13l13 4 8-5v1l-8 5-13-4z" fill="#555c5c" />
        <path d="M1 1l6 2 12 1v5l-5 2-8-3-1-4z" fill="#d6ab5c" stroke="#8a682c" strokeWidth=".6" />
        <circle cx="17" cy="14" r="1" fill="#3b9e3b" />
      </svg>
    ),
  },
  {
    name: 'Explorador de archivos',
    state: 'open',
    icon: (
      <svg viewBox="0 0 22 19" className="w-[22px] h-[19px]">
        <path d="M0 1.500A1 1 0 011 .5h7l2 2.500h11a1 1 0 011 1V16H0z" fill="#e3a21a" />
        <path d="M0 4h22v13H0z" fill="#ffd45e" />
        <path d="M4 18v-7a1 1 0 011-1h12a1 1 0 011 1v7h-4v-3H8v3z" fill="#3a92dd" />
      </svg>
    ),
  },
  {
    name: 'Ejecutar',
    icon: (
      <svg viewBox="0 0 24 16" className="w-6 h-4">
        <path d="M6 .5h17.500l-4 15H3z" fill="#4f8fcd" stroke="#a8d4f5" />
        <path d="M9 4h10.500l-2 8H7z" fill="#8cc4f0" stroke="#d5ecfc" />
        <path d="M11 6.500h5l-1 3h-5z" fill="#3a77b8" stroke="#fff" strokeWidth=".6" />
        <path d="M0 5h3M1 8h2M0 12h2" stroke="#8cc4f0" />
      </svg>
    ),
  },
  {
    name: 'Firefox',
    state: 'open',
    icon: (
      <svg viewBox="0 0 24 24" className="w-6 h-6">
        <defs>
          <linearGradient id="fox" x1=".8" y1="0" x2=".3" y2="1">
            <stop offset="0" stopColor="#ffe14a" />
            <stop offset=".45" stopColor="#ff8a1e" />
            <stop offset="1" stopColor="#f0245f" />
          </linearGradient>
        </defs>
        <path d="M14 1c3 2 4 4 4 6l2-2c2 3 3 6 3 8a11 10.500 0 01-22 0c0-3 1-6 3-8v3l3-4 1 4z" fill="url(#fox)" />
        <circle cx="12" cy="13" r="5" fill="#7446d6" />
        <path d="M6 9c3-1 5 0 7 1-2 1-2 2-5 3 1 3 5 4 8 2-2 4-8 4-10 0-1-2-1-4 0-6z" fill="#ff9a22" />
      </svg>
    ),
  },
  {
    name: 'Telegram',
    icon: (
      <svg viewBox="0 0 22 22" className="w-[22px] h-[22px]">
        <circle cx="11" cy="11" r="11" fill="#2aa1de" />
        <path d="M4.500 11L17 6l-2 11-4-3-2 2-.5-3.500L14 8l-7 4z" fill="#fff" />
      </svg>
    ),
  },
  { name: 'Word', state: 'open', icon: <WordLogo className="w-6 h-6" /> },
  {
    name: 'TSWin',
    state: 'open',
    icon: (
      <svg viewBox="0 0 24 24" className="w-6 h-6">
        <path d="M0 0h24v24H0z" fill="#b8b8c8" />
        <path d="M1 1h22v22H1z" fill="#101018" />
        <path d="M2 2h20v20H2z" fill="#0909e8" />
        <path d="M3 15l3-5 1 6-3 5zM17 8l4-3v6l-3 3zM16 17l4-2 1 4-4 2zM4 4l3 2-2 3z" fill="#0a0a6a" />
        <path d="M7 1h10v4H7z" fill="#8b1414" />
        <path d="M10.500 1h3v4h-3z" fill="#ffe100" />
        <path d="M10.500 5h3v18h-3z" fill="#c9c9c9" stroke="#555" strokeWidth=".6" />
        <circle cx="12" cy="12" r="4" fill="#111" stroke="#b4b4b4" strokeWidth="1.500" />
      </svg>
    ),
  },
  { name: 'Excel', state: 'active', icon: <ExcelLogo className="w-6 h-6" /> },
];

function Taskbar() {
  return (
    <div className="h-10 shrink-0 flex bg-linear-to-r from-[#20363f] via-[#203340] to-[#1a2747] text-white">
      <button aria-label="Inicio" className="w-12 flex items-center justify-center">
        <svg viewBox="0 0 16 16" className="w-4 h-4" fill="#fff"><path d="M0 2.300l6.500-.9v6.200H0zM7.300 1.300L16 0v7.600H7.300zM0 8.400h6.500v6.200L0 13.700zM7.300 8.400H16V16l-8.700-1.300z" /></svg>
      </button>
      <div className="w-[344px] flex items-center bg-[#f1f1f1] border border-[#c3c3c3] pl-[11px] pr-[11px]">
        <Search className="w-[18px] h-[18px] -scale-x-100 text-[#222]" strokeWidth={1.8} />
        <input aria-label="Buscar en Windows" placeholder="Escribe aquí para buscar" className="ml-2.5 w-0 flex-1 bg-transparent text-sm placeholder:text-[#333]" />
        <SnowTv />
      </div>
      <div className="flex gap-px ml-0.5">
        {apps.map((app) => (
          <button
            key={app.name}
            aria-label={app.name}
            className={`relative w-12 flex items-center justify-center ${app.state === 'active' ? 'bg-[#4b5a66]' : ''}`}
          >
            {app.icon}
            {app.state && <span className={`absolute bottom-0 h-0.5 bg-[#76b9ed] ${app.state === 'active' ? 'inset-x-0' : 'inset-x-1'}`} />}
          </button>
        ))}
      </div>
      <div className="ml-auto flex items-center text-xs">
        <button aria-label="Iconos ocultos" className="w-6 flex justify-center">
          <svg viewBox="0 0 12 8" className="w-3 h-2" fill="none" stroke="#fff" strokeWidth="1.200"><path d="M.5 7L6 1.500 11.500 7" /></svg>
        </button>
        <span className="w-6 flex justify-center">
          <svg viewBox="0 0 12 16" className="w-3 h-4" fill="none" stroke="#fff">
            <path d="M2 1.500c2-1.300 5-1.300 7 0M2 14.500c2 1.300 5 1.300 7 0M1 4.500h6.500v7H1zM7.500 7l3-2v6l-3-2" />
          </svg>
        </span>
        <span className="w-6 flex justify-center">
          <svg viewBox="0 0 16 12" className="w-4 h-3" fill="none" stroke="#fff">
            <path d="M5.500 3.500h8v7h-8zM14 5.500h1.500v3H14M1.500 0v3M4.500 0v3M.5 3.500h5M1 3.500c0 3 1 3 2 3v4h2" />
            <path d="M7 5h5v4H7z" fill="#fff" stroke="none" />
          </svg>
        </span>
        <span className="w-6 flex justify-center">
          <svg viewBox="0 0 16 14" className="w-4 h-3.5" fill="none" stroke="#fff">
            <path d="M6 1.500h9.500v8H3.500V6M.5.500h4v4h-4zM9.500 9.500v3.500M5 13.500h8" />
          </svg>
        </span>
        <button className="w-[34px] text-center">ESP</button>
        <div className="w-[78px] text-center leading-[18px] whitespace-nowrap">
          <div>06:03</div>
          <div>4 dic. 2023</div>
        </div>
        <button aria-label="Notificaciones" className="w-[38px] flex justify-center">
          <svg viewBox="0 0 16 16" className="w-4 h-4" fill="none" stroke="#fff"><path d="M.5.500h15v12H10.500L8 15l-2.500-2.500H.5z" /></svg>
        </button>
        <span className="w-px h-10 ml-[9px] mr-1 bg-[#5d6780]" />
      </div>
    </div>
  );
}

function PasteDialog() {
  return (
    <div
      role="dialog"
      aria-label="Pegado especial"
      className="absolute top-[5px] right-[18px] w-[551px] h-[437px] flex flex-col border border-[#6b6b6b] bg-[#f0f0f0] text-[11px] leading-4 text-black shadow-[0_2px_16px_2px_rgba(0,0,0,0.4)]"
    >
      <div className="h-[30px] flex items-center bg-white pl-2">
        <span className="mr-auto">Pegado especial</span>
        <button aria-label="Ayuda" className="w-[46px] text-[13px] font-medium">?</button>
        <button aria-label="Cerrar" className="w-[45px] flex justify-center">
          <svg viewBox="0 0 11 11" className="w-[11px] h-[11px]" stroke="#111"><path d="M.5.500l10 10M10.500.500l-10 10" /></svg>
        </button>
      </div>
      <div className="pl-1.5 pt-1.5 h-[46px]">Origen:</div>
      <div className="flex pl-1.5">
        <div className="w-[106px] flex flex-col gap-[3px] pt-[17px]">
          <label className="flex items-center gap-1 whitespace-nowrap">
            <input type="radio" name="modo" defaultChecked className="appearance-none w-[13px] h-[13px] rounded-full border border-[#333] bg-white checked:bg-[#333] checked:shadow-[inset_0_0_0_2px_#fff]" />
            <span><u>P</u>egar:</span>
          </label>
          <label className="flex items-center gap-1 whitespace-nowrap text-[#7d7d7d]">
            <input type="radio" name="modo" disabled className="appearance-none w-[13px] h-[13px] rounded-full border border-[#cccccc] bg-white" />
            Pegar vínculos:
          </label>
        </div>
        <div className="w-[272px]">
          <div id="como" className="h-[17px]"><u>C</u>omo:</div>
          <div className="h-[199px] flex border border-[#7a7f87] bg-white p-px">
            <ul role="listbox" aria-labelledby="como" className="flex-1">
              <li role="option" aria-selected="true" className="h-[13px] leading-[13px] pl-0.5 bg-[#0078d7] text-white outline-1 -outline-offset-1 outline-dotted outline-[#ff8728]">Texto Unicode</li>
              <li role="option" aria-selected="false" className="h-[13px] leading-[13px] pl-0.5">Texto</li>
            </ul>
            <div className="w-[17px] flex flex-col items-center justify-between py-1.5 bg-[#f0f0f0] text-[#a8a8a8]">
              <Chevron className="w-[9px] -scale-y-100" />
              <Chevron className="w-[9px]" />
            </div>
          </div>
        </div>
        <label className="h-4 mt-[17px] ml-[9px] flex items-center gap-1 text-[#7d7d7d]">
          <input type="checkbox" disabled className="appearance-none w-[13px] h-[13px] border border-[#cccccc] bg-white" />
          Mostrar como icono
        </label>
      </div>
      <div className="flex items-center pl-1.5 pr-1.5 mt-[19px]">
        <span>Resultado</span>
        <span className="flex-1 h-px ml-1.5 bg-[#dcdcdc]" />
      </div>
      <div className="flex pl-[19px] pt-1">
        <svg viewBox="0 0 27 30" className="w-[27px] h-[30px] mt-4 mr-[31px]" stroke="#000" shapeRendering="crispEdges">
          <path d="M.5 3.500h20v22H.5z" fill="#c0c0c0" />
          <path d="M5.500 5.500v-3h3v-2h4v2h3v3z" fill="#fff" />
          <path d="M11.500 10.500h10l4 4v14h-14z" fill="#fff" />
          <path d="M21.500 10.500v4h4" fill="none" />
          <path d="M14 16.500h8M14 19.500h9M14 22.500h9M14 25.500h9" stroke="#808080" />
        </svg>
        <p>Inserta el contenido del Portapapeles con formato de Texto Unicode.</p>
      </div>
      <div className="mt-auto mb-2 mr-1.5 flex justify-end gap-[9px]">
        <button className="w-[75px] h-[22px] border-2 border-[#0078d7] bg-[#e1e1e1]">Aceptar</button>
        <button className="w-[75px] h-[22px] border border-[#adadad] bg-[#e1e1e1]">Cancelar</button>
      </div>
    </div>
  );
}

export default function App() {
  return (
    <div className="relative h-screen flex flex-col overflow-hidden bg-[#efefef] font-['Open_Sans','Noto_Sans',sans-serif]">
      <TitleBar />
      <MenuTabs />
      <Ribbon />
      <FormulaBar />
      <Sheet />
      <SheetTabs />
      <StatusBar />
      <Taskbar />
      <PasteDialog />
    </div>
  );
}
